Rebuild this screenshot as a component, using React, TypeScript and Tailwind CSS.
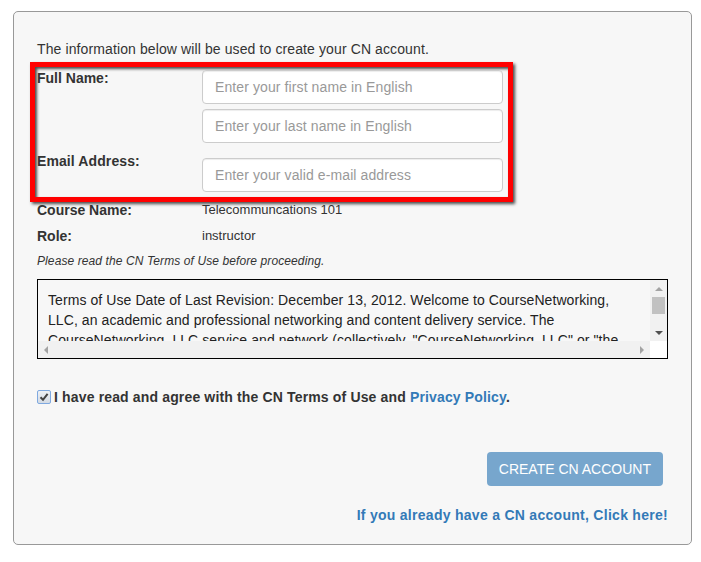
import { useState } from 'react'

const termsLines = [
  'Terms of Use Date of Last Revision: December 13, 2012. Welcome to CourseNetworking,',
  'LLC, an academic and professional networking and content delivery service. The',
  'CourseNetworking, LLC service and network (collectively, "CourseNetworking, LLC" or "the',
]

function TextInput({ placeholder, className = '' }: { placeholder: string; className?: string }) {
  return (
    <input
      type="text"
      placeholder={placeholder}
      className={`block w-[301px] h-[34px] px-[12px] bg-white border border-[#ccc] rounded-[4px] text-[14px] tracking-[0.1px] text-[#555] placeholder:text-[#999] shadow-[inset_0_1px_1px_rgba(0,0,0,0.075)] outline-none ${className}`}
    />
  )
}

function ScrollArrow({ dir, color }: { dir: 'up' | 'down' | 'left' | 'right'; color: string }) {
  const points = {
    up: '0,4 4,0 8,4',
    down: '0,0 8,0 4,4',
    left: '4,0 4,8 0,4',
    right: '0,0 4,4 0,8',
  }[dir]
  const vertical = dir === 'up' || dir === 'down'
  return (
    <svg width={vertical ? 8 : 4} height={vertical ? 4 : 8} viewBox={vertical ? '0 0 8 4' : '0 0 4 8'}>
      <polygon points={points} fill={color} />
    </svg>
  )
}

export default function App() {
  const [agreed, setAgreed] = useState(true)

  return (
    <div className="min-h-[562px] bg-white pt-[11px] pl-[13px] font-['Liberation_Sans',Arial,sans-serif] text-[#333]">
      <div className="w-[679px] bg-[#f7f7f7] border border-[#999] rounded-[5px] pt-[27px] pb-[19px] px-[23px]">
        <p className="text-[14px] leading-[20px] tracking-[0.11px]">
          The information below will be used to create your CN account.
        </p>

        {/* highlighted fields */}
        <div className="mt-[3px] -ml-[7px] w-[483px] border-[5px] border-[#ff0000] pl-[2px] pr-[5px] pt-[3px] pb-[5px] shadow-[2px_2px_3px_rgba(0,0,0,0.7),inset_2px_2px_3px_rgba(0,0,0,0.7)]">
          <div className="flex">
            <label className="w-[165px] -mt-[2px] text-[14px] leading-[20px] font-bold">Full Name:</label>
            <div className="flex flex-col gap-[5px]">
              <TextInput placeholder="Enter your first name in English" />
              <TextInput placeholder="Enter your last name in English" />
            </div>
          </div>
          <div className="flex mt-[8px]">
            <label className="w-[165px] text-[14px] leading-[20px] font-bold tracking-[0.1px]">Email Address:</label>
            <TextInput placeholder="Enter your valid e-mail address" className="mt-[7px]" />
          </div>
        </div>

        <div className="-mt-[2px] flex items-center h-[20px]">
          <span className="w-[165px] text-[14px] font-bold">Course Name:</span>
          <span className="text-[13px]">Telecommuncations 101</span>
        </div>
        <div className="mt-[6px] flex items-center h-[20px]">
          <span className="w-[165px] text-[14px] font-bold">Role:</span>
          <span className="text-[13px]">instructor</span>
        </div>

        <p className="mt-[7px] text-[12px] leading-[17px] italic tracking-[0.1px]">
          Please read the CN Terms of Use before proceeding.
        </p>

        {/* terms box with scrollbars */}
        <div className="mt-[9px] h-[80px] border border-black bg-[#f7f7f7] flex flex-col">
          <div className="flex h-[61px]">
            <div className="flex-1 overflow-hidden pt-[10px] pl-[10px] text-[14px] leading-[20px] tracking-[0.08px] text-[#222]">
              {termsLines.map((line) => (
                <div key={line} className="whitespace-nowrap">
                  {line}
                </div>
              ))}
            </div>
            <div className="w-[17px] bg-[#f1f1f1] flex flex-col items-center">
              <div className="h-[17px] flex items-center justify-center">
                <ScrollArrow dir="up" color="#a3a3a3" />
              </div>
              <div className="w-[13px] h-[17px] bg-[#c1c1c1]" />
              <div className="flex-1" />
              <div className="h-[17px] flex items-center justify-center">
                <ScrollArrow dir="down" color="#505050" />
              </div>
            </div>
          </div>
          <div className="flex h-[17px]">
            <div className="flex-1 bg-[#f1f1f1] flex items-center justify-between px-[6px]">
              <ScrollArrow dir="left" color="#a3a3a3" />
              <ScrollArrow dir="right" color="#a3a3a3" />
            </div>
            <div className="w-[17px] bg-white" />
          </div>
        </div>

        <label className="mt-[28px] flex items-center h-[20px] text-[14px] font-bold tracking-[0.15px] cursor-pointer">
          <span
            onClick={() => setAgreed(!agreed)}
            className="w-[14px] h-[14px] border border-[#7fa9e0] rounded-[2px] bg-[linear-gradient(#eef1f5,#d4dbe4)] flex items-center justify-center"
          >
            {agreed && (
              <svg width="10" height="10" viewBox="0 0 10 10">
                <path d="M1.5 5.2 L4 7.8 L8.6 1.8" stroke="#444" strokeWidth="2" fill="none" />
              </svg>
            )}
          </span>
          <span className="ml-[3px]">
            I have read and agree with the CN Terms of Use and{' '}
            <a href="#" className="text-[#337ab7]">Privacy Policy</a>.
          </span>
        </label>

        <div className="mt-[45px] flex justify-end pr-[5px]">
          <button
            disabled
            className="h-[34px] px-[12px] rounded-[4px] bg-[#77a6cd] text-white text-[14px] uppercase"
          >
            Create CN Account
          </button>
        </div>

        <div className="mt-[19px] flex justify-end h-[20px] items-center">
          <a href="#" className="text-[14px] font-bold tracking-[0.28px] text-[#337ab7]">
            If you already have a CN account, Click here!
          </a>
        </div>
      </div>
    </div>
  )
}
